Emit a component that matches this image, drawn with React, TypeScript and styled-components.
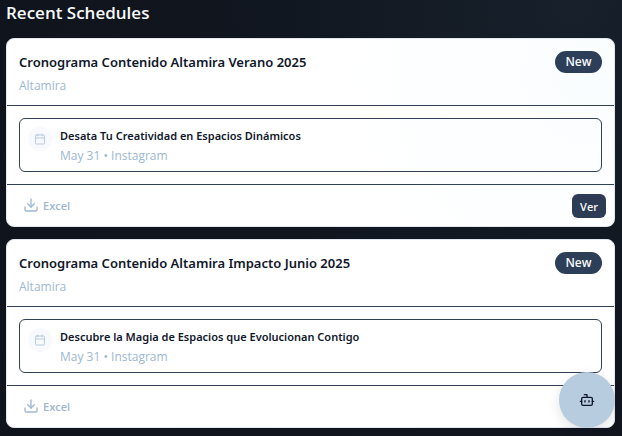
import React from "react";
import styled, { createGlobalStyle } from "styled-components";
import { Bot, Calendar, Download } from "lucide-react";

const GlobalStyle = createGlobalStyle`
  *, *::before, *::after { box-sizing: border-box; }
  body {
    margin: 0;
    min-height: 100vh;
    background: radial-gradient(circle at 92% 0%, #17202b 0%, #10151e 50%, #0e131c 100%) #0e131c;
    color: #0f172a;
    font-family: "Segoe UI", "Open Sans", sans-serif;
  }
  h2, h3, h4, p { margin: 0; padding: 0; }
  button { font-family: inherit; cursor: pointer; }
`;

const Page = styled.main`
  padding: 0 7px 8px 6px;
`;

const Heading = styled.h2`
  padding: 1px 0 13px;
  color: #f8fafc;
  font-size: 17px;
  font-weight: 600;
  line-height: 24px;
`;

const List = styled.div`
  display: grid;
  gap: 12px;
`;

const Card = styled.article<{ $tinted?: boolean }>`
  border: 1px solid #e2e8f0;
  border-radius: 8px;
  overflow: hidden;
  background: ${(p) =>
    p.$tinted ? "radial-gradient(circle at 96% 20%, #fafdff 0%, #ffffff 42%)" : "#ffffff"};
`;

const CardHeader = styled.header`
  padding: 12px 12px 10px;
  border-bottom: 1px solid #334155;
`;

const TitleRow = styled.div`
  display: flex;
  align-items: center;
  justify-content: space-between;
  gap: 12px;
  margin-bottom: 4px;
`;

const Title = styled.h3`
  font-family: "Segoe UI", "Noto Sans", sans-serif;
  font-size: 13px;
  font-weight: 600;
  line-height: 22px;
`;

const Badge = styled.span`
  min-width: 47px;
  padding: 0 10px;
  border-radius: 11px;
  background: #2d3e58;
  color: #f8fafc;
  font-size: 12px;
  font-weight: 600;
  line-height: 22px;
  text-align: center;
`;

const Muted = styled.p`
  color: #9db7d3;
  font-size: 12px;
  line-height: 18px;
`;

const CardBody = styled.div`
  padding: 12px;
`;

const Post = styled.div`
  display: flex;
  gap: 8px;
  padding: 8px 8px 6px;
  border: 1px solid #334155;
  border-radius: 6px;
`;

const PostIcon = styled.span`
  display: grid;
  place-items: center;
  flex: none;
  width: 24px;
  height: 24px;
  border-radius: 50%;
  background: #f7f9fc;
  color: #b8ccdf;
`;

const PostTitle = styled.h4`
  margin-bottom: 2px;
  font-family: "Segoe UI", "Noto Sans", sans-serif;
  font-size: 11px;
  font-weight: 600;
  line-height: 18px;
`;

const CardFooter = styled.footer`
  display: flex;
  align-items: center;
  justify-content: space-between;
  padding: 9px 8px 8px;
  border-top: 1px solid #334155;
`;

const ExportButton = styled.button`
  display: flex;
  align-items: center;
  gap: 4px;
  height: 24px;
  padding: 0 8px 2px;
  border: 0;
  background: none;
  color: #9db7d3;
  font-size: 11px;
  font-weight: 600;
`;

const ViewButton = styled.button`
  height: 24px;
  padding: 0 8px;
  border: 0;
  border-radius: 6px;
  background: #2d3b55;
  color: #f8fafc;
  font-size: 11px;
  font-weight: 600;
`;

const ChatButton = styled.button`
  position: fixed;
  right: 7px;
  bottom: 8px;
  display: grid;
  place-items: center;
  width: 56px;
  height: 56px;
  padding: 0;
  border: 0;
  border-radius: 50%;
  background: #b8ccdf;
  color: #0f172a;
  box-shadow: 0 4px 12px rgba(15, 23, 42, 0.12);
`;

const schedules = [
  {
    title: "Cronograma Contenido Altamira Verano 2025",
    client: "Altamira",
    post: "Desata Tu Creatividad en Espacios Dinámicos",
    meta: "May 31 • Instagram",
    tinted: true,
  },
  {
    title: "Cronograma Contenido Altamira Impacto Junio 2025",
    client: "Altamira",
    post: "Descubre la Magia de Espacios que Evolucionan Contigo",
    meta: "May 31 • Instagram",
    tinted: false,
  },
];

export default function App() {
  return (
    <>
      <GlobalStyle />
      <Page>
        <Heading>Recent Schedules</Heading>
        <List>
          {schedules.map((s) => (
            <Card key={s.title} $tinted={s.tinted}>
              <CardHeader>
                <TitleRow>
                  <Title>{s.title}</Title>
                  <Badge>New</Badge>
                </TitleRow>
                <Muted>{s.client}</Muted>
              </CardHeader>
              <CardBody>
                <Post>
                  <PostIcon>
                    <Calendar size={12} aria-hidden />
                  </PostIcon>
                  <div>
                    <PostTitle>{s.post}</PostTitle>
                    <Muted>{s.meta}</Muted>
                  </div>
                </Post>
              </CardBody>
              <CardFooter>
                <ExportButton type="button">
                  <Download size={16} aria-hidden />
                  Excel
                </ExportButton>
                <ViewButton type="button">Ver</ViewButton>
              </CardFooter>
            </Card>
          ))}
        </List>
      </Page>
      <ChatButton type="button" aria-label="Open assistant">
        <Bot size={16} aria-hidden />
      </ChatButton>
    </>
  );
}
